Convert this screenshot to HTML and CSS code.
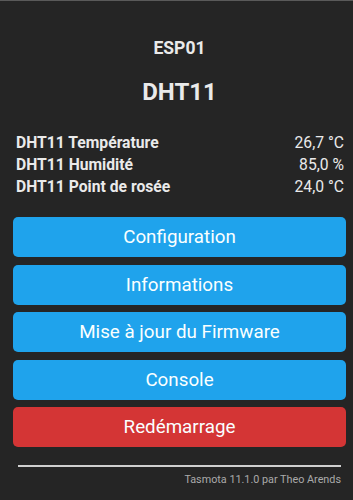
FILE: index.html
```html
<!DOCTYPE html>
<html lang="fr">
<head>
<meta charset="utf-8">
<link rel="stylesheet" href="styles.css">
</head>
<body>
<div class="page">
  <h3 class="dev">ESP01</h3>
  <h2 class="mod">DHT11</h2>
  <div class="sensors">
    <div class="row"><span class="name">DHT11 Température</span><span class="val">26,7 °C</span></div>
    <div class="row"><span class="name">DHT11 Humidité</span><span class="val">85,0 %</span></div>
    <div class="row"><span class="name">DHT11 Point de rosée</span><span class="val">24,0 °C</span></div>
  </div>
  <div class="buttons">
    <button class="btn">Configuration</button>
    <button class="btn">Informations</button>
    <button class="btn">Mise à jour du Firmware</button>
    <button class="btn">Console</button>
    <button class="btn red">Redémarrage</button>
  </div>
  <div class="rule"></div>
  <div class="foot">Tasmota 11.1.0 par Theo Arends</div>
</div>
</body>
</html>
```
FILE: styles.css
```css
html, body {
  margin: 0;
  padding: 0;
  background: #252525;
}
body {
  border-top: 1px solid #5a5a5a;
  color: #eaeaea;
  font-family: Roboto, "Liberation Sans", sans-serif;
}
.page {
  padding: 0 7px 0 13px;
  display: flex;
  flex-direction: column;
}
.dev {
  margin: 37px 0 0;
  font-size: 17.5px;
  line-height: 20px;
  font-weight: 700;
  text-align: center;
}
.mod {
  margin: 19.5px 0 0;
  font-size: 24px;
  line-height: 28px;
  font-weight: 700;
  text-align: center;
}
.sensors {
  margin-top: 26.5px;
  padding: 0 2px 0 3px;
}
.row {
  display: flex;
  justify-content: space-between;
  font-size: 15.7px;
  line-height: 22px;
}
.name {
  font-weight: 700;
}
.buttons {
  margin-top: 19px;
  display: flex;
  flex-direction: column;
  gap: 7.5px;
}
.btn {
  height: 40px;
  border: 0;
  border-radius: 5px;
  background: #1fa3ec;
  color: #faffff;
  font-family: Roboto, "Liberation Sans", sans-serif;
  font-size: 18.8px;
  padding: 0;
}
.btn.red {
  background: #d43535;
}
.rule {
  margin: 18px 5px 0;
  height: 2px;
  background: #d0d0d0;
}
.foot {
  margin: 6px 5px 0;
  text-align: right;
  font-size: 10.8px;
  color: #aaaaaa;
}
```
